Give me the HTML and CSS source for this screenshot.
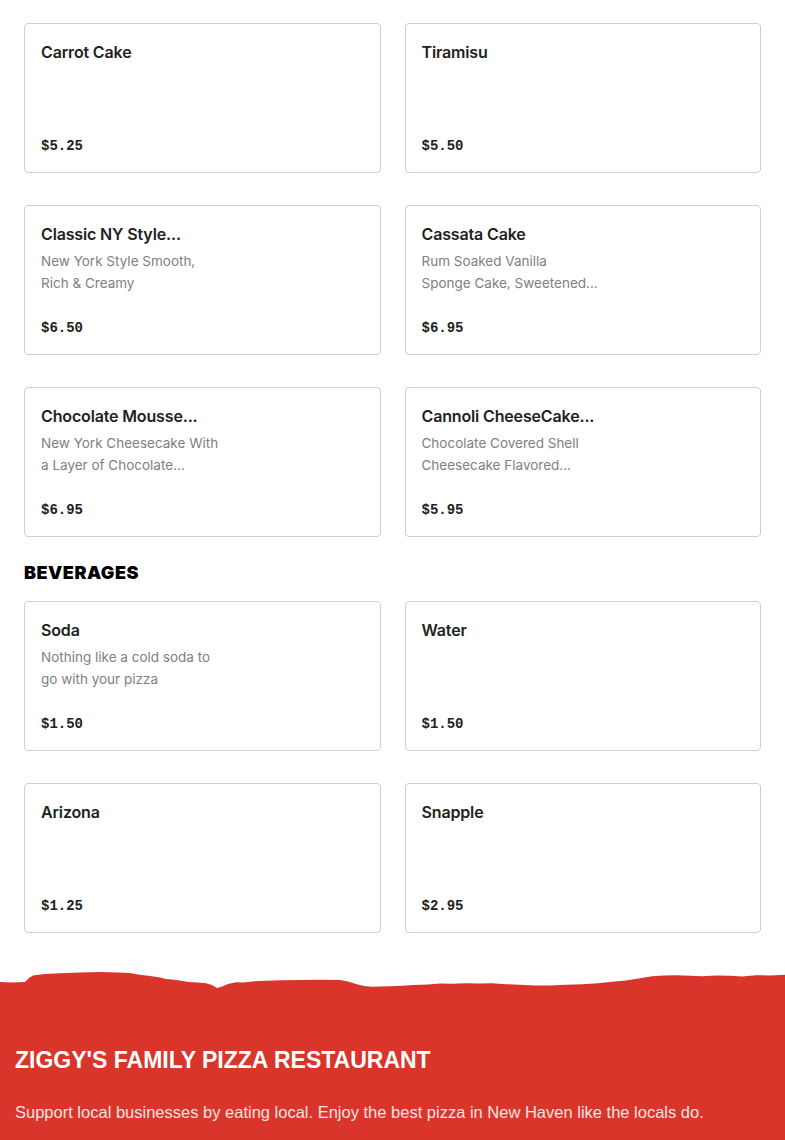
FILE: index.html
```html
<!DOCTYPE html>
<html>
<head>
<meta charset="utf-8">
<link rel="stylesheet" href="styles.css">
</head>
<body>
<main class="menu">
  <div class="grid">
    <div class="card"><div class="title">Carrot Cake</div><div class="price">$5.25</div></div>
    <div class="card"><div class="title">Tiramisu</div><div class="price">$5.50</div></div>
    <div class="card"><div class="title">Classic NY Style...</div><div class="desc">New York Style Smooth,<br>Rich &amp; Creamy</div><div class="price">$6.50</div></div>
    <div class="card"><div class="title">Cassata Cake</div><div class="desc">Rum Soaked Vanilla<br>Sponge Cake, Sweetened...</div><div class="price">$6.95</div></div>
    <div class="card"><div class="title">Chocolate Mousse...</div><div class="desc">New York Cheesecake With<br>a Layer of Chocolate...</div><div class="price">$6.95</div></div>
    <div class="card"><div class="title">Cannoli CheeseCake...</div><div class="desc">Chocolate Covered Shell<br>Cheesecake Flavored...</div><div class="price">$5.95</div></div>
  </div>
  <h2 class="section-title">BEVERAGES</h2>
  <div class="grid">
    <div class="card"><div class="title">Soda</div><div class="desc">Nothing like a cold soda to<br>go with your pizza</div><div class="price">$1.50</div></div>
    <div class="card"><div class="title">Water</div><div class="price">$1.50</div></div>
    <div class="card"><div class="title">Arizona</div><div class="price">$1.25</div></div>
    <div class="card"><div class="title">Snapple</div><div class="price">$2.95</div></div>
  </div>
</main>
<footer class="footer">
  <svg class="torn" viewBox="0 0 785 30" preserveAspectRatio="none" width="785" height="30">
    <path fill="#d9352a" d="M0 13 L12 13.5 L25 13 L29 9 L33 6.5 L45 5 L60 4.2 L80 3.6 L100 3 L118 3.4 L130 4 L138 5.5 L150 7 L160 8.5 L166 10 L172 10.6 L180 11.5 L188 13 L198 13.6 L206 14.2 L212 16 L217 19 L222 17.5 L228 15 L236 13.3 L244 13.6 L254 12.3 L266 11.8 L282 11.2 L300 11 L320 10.8 L340 11 L348 12.5 L356 15 L364 17 L372 17.8 L380 17.5 L390 17.2 L402 16.8 L414 16 L428 15.4 L440 14.6 L452 14.8 L466 14.2 L480 14.4 L492 14.2 L506 15.2 L520 15.8 L534 16.4 L550 16.6 L566 15.8 L582 15.2 L598 14.2 L612 12.8 L626 11.4 L640 9.2 L652 7.2 L664 6.4 L676 6.2 L690 6.8 L702 7.2 L716 6.4 L730 6.8 L742 7.4 L756 6.2 L770 6.4 L785 5.8 L785 30 L0 30 Z"/>
  </svg>
  <div class="footer-body">
    <h3 class="brand">ZIGGY'S FAMILY PIZZA RESTAURANT</h3>
    <p class="tagline">Support local businesses by eating local. Enjoy the best pizza in New Haven like the locals do.</p>
  </div>
</footer>
</body>
</html>
```

FILE: styles.css
```css
html, body {
  margin: 0;
  padding: 0;
  background: #fff;
}
body {
  font-family: Inter, "Liberation Sans", sans-serif;
  color: #222;
  overflow: hidden;
}
.menu {
  padding: 23px 24px 0 24px;
}
.grid {
  display: grid;
  grid-template-columns: 1fr 1fr;
  column-gap: 24px;
  row-gap: 32px;
}
.card {
  box-sizing: border-box;
  height: 150px;
  border: 1px solid #cfcfcf;
  border-radius: 4px;
  padding: 16px;
  display: flex;
  flex-direction: column;
}
.title {
  font-size: 16px;
  font-weight: 600;
  line-height: 24px;
  color: #222;
  letter-spacing: -0.15px;
}
.desc {
  margin-top: 4px;
  font-size: 13.5px;
  line-height: 22px;
  color: #808080;
}
.price {
  margin-top: auto;
  font-family: "Liberation Mono", "DejaVu Sans Mono", monospace;
  font-weight: 700;
  font-size: 14px;
  line-height: 20px;
  color: #222;
}
.section-title {
  margin: 24px 0 16px 0;
  font-family: Inter, "Liberation Sans", sans-serif;
  font-weight: 900;
  font-size: 18px;
  line-height: 24px;
  color: #000;
  letter-spacing: 0.5px;
}
.footer {
  margin-top: 36px;
}
.torn {
  display: block;
  width: 785px;
  height: 30px;
}
.footer-body {
  background: #d9352a;
  padding: 48px 15px 16px 15px;
  margin-top: -1px;
}
.brand {
  margin: 0;
  font-family: "Liberation Sans", sans-serif;
  font-weight: 700;
  font-size: 23px;
  line-height: 28px;
  color: #fff;
}
.tagline {
  margin: 26px 0 0 0;
  font-family: "Liberation Sans", sans-serif;
  font-size: 16.5px;
  line-height: 24px;
  color: #fbe3e1;
}
```
